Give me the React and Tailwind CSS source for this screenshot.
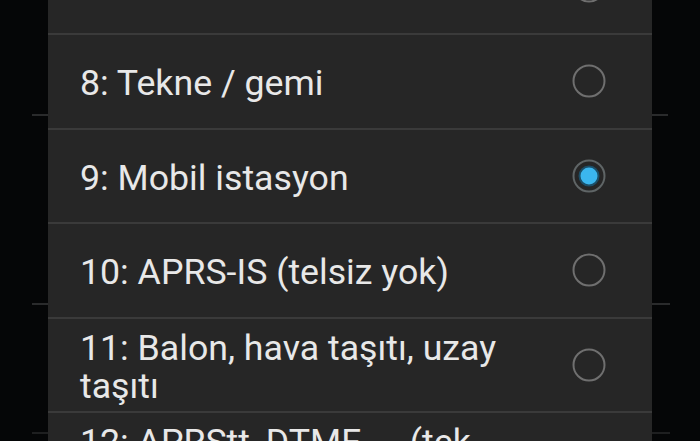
import React, { useState } from 'react';

const options = [
  { id: 7, label: '7: El telsizi' },
  { id: 8, label: '8: Tekne / gemi' },
  { id: 9, label: '9: Mobil istasyon' },
  { id: 10, label: '10: APRS-IS (telsiz yok)' },
  { id: 11, label: '11: Balon, hava taşıtı, uzay taşıtı' },
  { id: 12, label: '12: APRStt, DTMF, ... (tek yönlü)' },
];

const Radio = ({ checked }) => (
  <svg width="36" height="36" viewBox="0 0 36 36" className="shrink-0">
    <circle cx="18" cy="18" r="15.5" fill="none" stroke={checked ? '#5f6566' : '#6f6f6f'} strokeWidth="2" />
    {checked && <circle cx="18" cy="18" r="9.5" fill="#3bb6ee" stroke="#1c4f68" strokeWidth="2" />}
  </svg>
);

const App = () => {
  const [selected, setSelected] = useState(9);

  return (
    <div className="relative w-[700px] h-[441px] overflow-hidden bg-[#050607] font-['Roboto','Liberation_Sans',sans-serif]">
      {/* dimmed page separators behind the dialog */}
      <div className="absolute left-[32px] top-[114px] w-[16px] h-[2px] bg-[#2a2b2c]" />
      <div className="absolute left-[652px] top-[114px] w-[16px] h-[2px] bg-[#2a2b2c]" />
      <div className="absolute left-[32px] top-[303px] w-[16px] h-[2px] bg-[#2a2b2c]" />
      <div className="absolute left-[652px] top-[303px] w-[18px] h-[2px] bg-[#2a2b2c]" />
      <div className="absolute left-[32px] top-[432px] w-[16px] h-[2px] bg-[#1e1f20]" />
      <div className="absolute left-[652px] top-[432px] w-[18px] h-[2px] bg-[#1e1f20]" />

      <div className="relative ml-[48px] mt-[-61.5px] w-[604px] bg-[#262626]">
        {options.map((opt, i) => (
          <button
            key={opt.id}
            onClick={() => setSelected(opt.id)}
            className={`w-full h-[94.5px] flex items-center justify-between pl-[32px] pr-[45px] text-left ${i > 0 ? 'border-t-2 border-[#3a3a3a]' : ''}`}
          >
            <span className="max-w-[445px] pt-[4px] text-[35.7px] leading-[38px] text-[#e8e8e8]">{opt.label}</span>
            <Radio checked={selected === opt.id} />
          </button>
        ))}
      </div>
    </div>
  );
};

export default App;
